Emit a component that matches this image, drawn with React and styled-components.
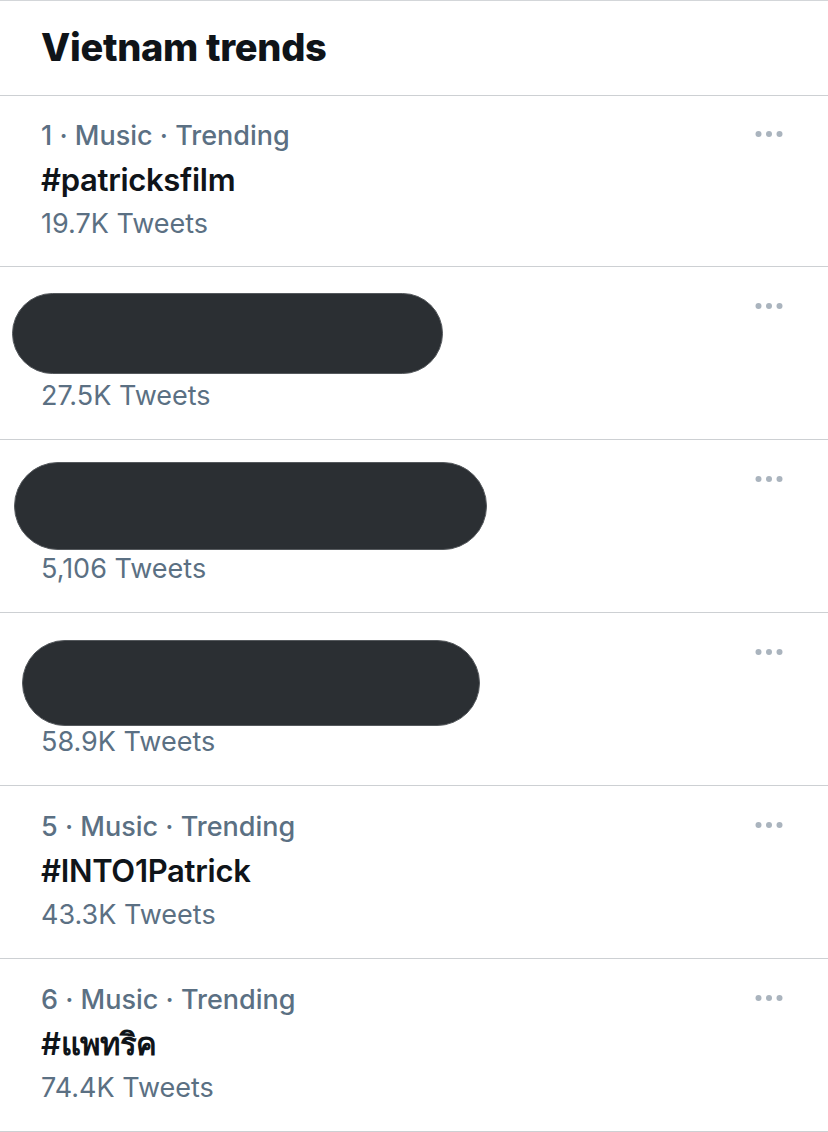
import React from 'react'
import styled, { createGlobalStyle } from 'styled-components'

const GlobalStyle = createGlobalStyle`
  * { box-sizing: border-box; }
  body {
    margin: 0;
    background: #ffffff;
    font-family: Inter, "Noto Sans", "Liberation Sans", sans-serif;
    -webkit-font-smoothing: antialiased;
  }
`

const trends = [
  { id: 1, meta: '1 · Music · Trending', title: '#patricksfilm', count: '19.7K Tweets' },
  { id: 2, count: '27.5K Tweets', hidden: { left: 12, top: 26, width: 431, height: 81 } },
  { id: 3, count: '5,106 Tweets', hidden: { left: 14, top: 22, width: 473, height: 88 } },
  { id: 4, count: '58.9K Tweets', hidden: { left: 22, top: 27, width: 458, height: 86 } },
  { id: 5, meta: '5 · Music · Trending', title: '#INTO1Patrick', count: '43.3K Tweets' },
  { id: 6, meta: '6 · Music · Trending', title: '#แพทริค', count: '74.4K Tweets' },
]

const MoreIcon = () => (
  <svg width="28" height="8" viewBox="0 0 28 8">
    <circle cx="3.5" cy="4" r="3" fill="#aab4be" />
    <circle cx="14" cy="4" r="3" fill="#aab4be" />
    <circle cx="24.5" cy="4" r="3" fill="#aab4be" />
  </svg>
)

export default function App() {
  return (
    <>
      <GlobalStyle />
      <Panel>
        <Header>
          <h2>Vietnam trends</h2>
        </Header>
        {trends.map((t, i) => (
          <Row key={t.id} $first={i === 0}>
            <Info>
              {t.hidden ? (
                <Blank />
              ) : (
                <>
                  <Meta $strong>{t.meta}</Meta>
                  <Title>{t.title}</Title>
                </>
              )}
              <Meta>{t.count}</Meta>
            </Info>
            <More>
              <MoreIcon />
            </More>
            {t.hidden && (
              <Redaction
                style={{
                  left: t.hidden.left,
                  top: t.hidden.top,
                  width: t.hidden.width,
                  height: t.hidden.height,
                }}
              />
            )}
          </Row>
        ))}
      </Panel>
    </>
  )
}

const Panel = styled.div`
  width: 828px;
  border-top: 1px solid #d3d6d9;
`

const Header = styled.div`
  height: 95px;
  display: flex;
  align-items: center;
  padding: 0 41px 2px;
  border-bottom: 1px solid #cdd0d3;
  h2 {
    margin: 0;
    font-size: 38px;
    font-weight: 800;
    letter-spacing: -0.3px;
    color: #0f1419;
  }
`

const Row = styled.div`
  position: relative;
  height: ${(p) => (p.$first ? 171 : 173)}px;
  display: flex;
  justify-content: space-between;
  align-items: flex-start;
  padding: ${(p) => (p.$first ? 18 : 19)}px 41px 0;
  border-bottom: 1px solid #cdd0d3;
`

const Info = styled.div`
  display: flex;
  flex-direction: column;
`

const Meta = styled.div`
  font-size: 27px;
  line-height: 44px;
  font-weight: ${(p) => (p.$strong ? 500 : 400)};
  color: #5b7083;
  white-space: nowrap;
`

const Title = styled.div`
  font-size: 31px;
  line-height: 44px;
  font-weight: 600;
  letter-spacing: -0.3px;
  color: #0f1419;
  white-space: nowrap;
`

const Blank = styled.div`
  height: 88px;
`

const More = styled.div`
  display: flex;
  padding: 16px 4px 0 0;
`

const Redaction = styled.div`
  position: absolute;
  background: #2b2f33;
  border: 1px solid #55595d;
  border-radius: 50px;
`
